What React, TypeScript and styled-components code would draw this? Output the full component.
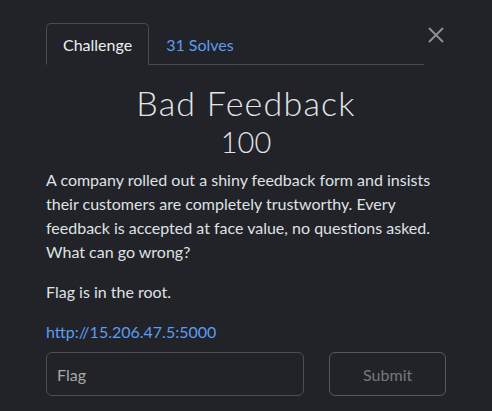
import React from "react";
import styled, { createGlobalStyle } from "styled-components";

const Global = createGlobalStyle`
  html, body { margin: 0; padding: 0; background: #212328; }
  body { font-family: Lato, "Open Sans", sans-serif; color: #e1e3e6; }
  * { box-sizing: border-box; }
`;

const Page = styled.div`
  width: 492px;
  height: 411px;
  background: #212328;
  position: relative;
  padding: 23px 46px 0 46px;
`;

const Close = styled.button`
  position: absolute;
  top: 25px;
  left: 426px;
  width: 20px;
  height: 20px;
  padding: 0;
  border: none;
  background: transparent;
  display: flex;
  align-items: center;
  justify-content: center;
`;

const Tabs = styled.div`
  display: flex;
  border-bottom: 1px solid #474b52;
  height: 42px;
  margin-right: 22px;
`;

const Tab = styled.div<{ $active?: boolean }>`
  height: 42px;
  padding: 0 16px;
  display: flex;
  align-items: center;
  font-size: 16px;
  margin-bottom: -1px;
  border: 1px solid ${(p) => (p.$active ? "#474b52" : "transparent")};
  border-bottom-color: ${(p) => (p.$active ? "#212328" : "transparent")};
  border-radius: 5px 5px 0 0;
  color: ${(p) => (p.$active ? "#eceef0" : "#5e9cf0")};
`;

const Title = styled.h1`
  margin: 18px 0 0;
  text-align: center;
  font-size: 34px;
  font-weight: 300;
  letter-spacing: 1.2px;
  line-height: 40px;
  color: #e3e5e8;
`;

const Points = styled.div`
  text-align: center;
  font-size: 29px;
  font-weight: 300;
  line-height: 36px;
  margin-top: 1px;
  color: #e3e5e8;
`;

const Para = styled.p`
  margin: 8px 0 16px;
  font-size: 16px;
  line-height: 24px;
  color: #dfe1e4;
  & + & { margin-top: 0; }
`;

const Link = styled.a`
  color: #5e9cf0;
  text-decoration: none;
`;

const Form = styled.div`
  display: flex;
  gap: 25px;
  margin-top: -8px;
`;

const Input = styled.input`
  width: 259px;
  height: 44px;
  background: transparent;
  border: 1px solid #4b4f56;
  border-radius: 6px;
  padding: 0 10px;
  font-family: Lato, sans-serif;
  font-size: 16px;
  color: #e1e3e6;
  &::placeholder { color: #a6a9ad; }
  outline: none;
`;

const Submit = styled.button`
  width: 117px;
  height: 44px;
  background: transparent;
  border: 1px solid #55595f;
  border-radius: 6px;
  font-family: Lato, sans-serif;
  font-size: 16px;
  color: #75797e;
`;

export default function App() {
  return (
    <>
      <Global />
      <Page>
        <Close aria-label="close">
          <svg width="18" height="18" viewBox="0 0 18 18">
            <path d="M2 2 L16 16 M16 2 L2 16" stroke="#8b8e92" strokeWidth="2" />
          </svg>
        </Close>
        <Tabs>
          <Tab $active>Challenge</Tab>
          <Tab>31 Solves</Tab>
        </Tabs>
        <Title>Bad Feedback</Title>
        <Points>100</Points>
        <Para>
          A company rolled out a shiny feedback form and insists their customers are completely
          trustworthy. Every feedback is accepted at face value, no questions asked. What can go
          wrong?
        </Para>
        <Para>Flag is in the root.</Para>
        <Para>
          <Link href="#">http://15.206.47.5:5000</Link>
        </Para>
        <Form>
          <Input placeholder="Flag" />
          <Submit>Submit</Submit>
        </Form>
      </Page>
    </>
  );
}
